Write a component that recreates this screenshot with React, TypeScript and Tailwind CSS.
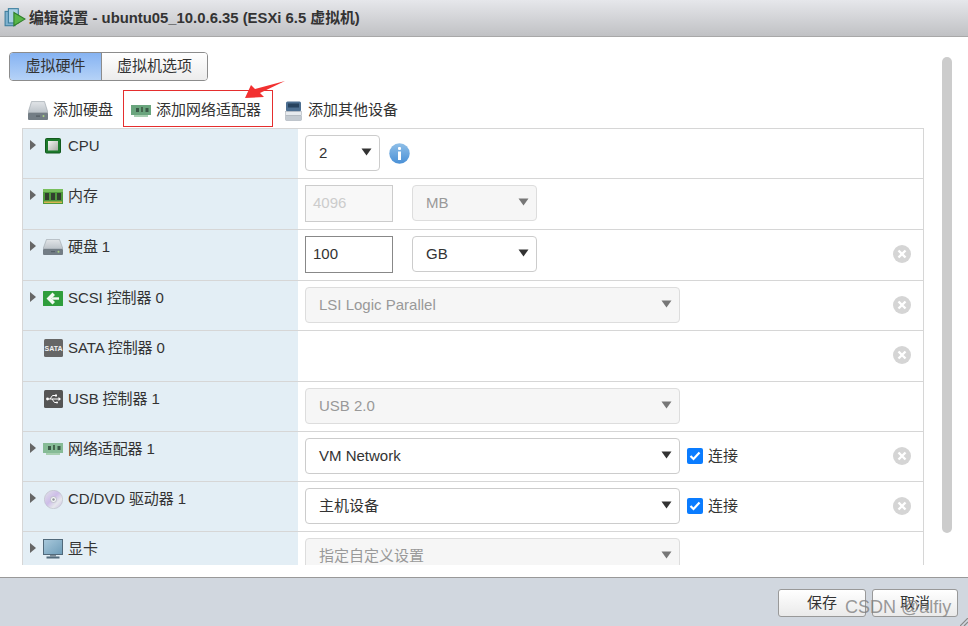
import type { ReactNode } from 'react';

const VmIcon = () => (
  <svg width="22" height="22" viewBox="0 0 20 20">
    <rect x="1" y="4" width="9" height="13" fill="#7fb2cf" stroke="#3f7f9f" />
    <rect x="4" y="1.5" width="9" height="13" fill="#a9d0e4" stroke="#3f7f9f" />
    <path d="M9 5 L19 11 L9 17 Z" fill="#58b548" stroke="#2f7f2a" />
  </svg>
);

const DiskIcon = ({ tall }: { tall?: boolean }) => (
  <svg width="20" height={tall ? 19 : 16} viewBox="0 0 20 17" preserveAspectRatio="none">
    <defs>
      <linearGradient id="diskTop" x1="0" y1="0" x2="0" y2="1">
        <stop offset="0" stopColor="#e2e5e8" />
        <stop offset="1" stopColor="#bcc3c9" />
      </linearGradient>
    </defs>
    <path d="M3.5 0.5 H16.5 L20 10.5 H0 Z" fill="url(#diskTop)" stroke="#9aa2a8" strokeWidth="0.6" />
    <rect x="0" y="10.5" width="20" height="6.5" rx="1" fill="#737d85" />
    <circle cx="15.5" cy="13.5" r="1" fill="#a8d080" />
    <rect x="8" y="13" width="4" height="1" fill="#4f585f" />
  </svg>
);

const NicIcon = ({ faded }: { faded?: boolean }) => (
  <svg width="20" height="14" viewBox="0 0 20 14">
    <rect x="0" y="1" width="20" height="10" fill={faded ? '#86bb96' : '#6aa57d'} />
    <rect x="3" y="11" width="14" height="2" fill="#a8cfb1" />
    <rect x="5" y="4" width="3" height="4" fill="#3a5a47" />
    <rect x="10" y="3" width="2" height="5" fill="#46684f" />
    <rect x="14.5" y="4" width="3" height="4" fill="#3a5a47" />
  </svg>
);

const OtherIcon = () => (
  <svg width="17" height="20" viewBox="0 0 17 20">
    <rect x="1" y="0.5" width="15" height="10" rx="1.5" fill="#4d6f91" />
    <rect x="3" y="2.5" width="11" height="4" fill="#27435f" />
    <rect x="0.5" y="10.5" width="16" height="4" fill="#e6eaee" stroke="#a8b0b8" strokeWidth="0.6" />
    <rect x="0.5" y="14.5" width="16" height="5" rx="1" fill="#c3cad1" stroke="#a8b0b8" strokeWidth="0.6" />
  </svg>
);

const CpuIcon = () => (
  <svg width="16" height="16" viewBox="0 0 16 16">
    <rect x="0.5" y="0.5" width="15" height="14.5" rx="1" fill="#1d7a2c" stroke="#125a1e" />
    <defs>
      <linearGradient id="cpuCore" x1="0" y1="0" x2="1" y2="1">
        <stop offset="0" stopColor="#f4f4f2" />
        <stop offset="1" stopColor="#a9ada6" />
      </linearGradient>
    </defs>
    <rect x="3" y="3" width="10" height="9.5" fill="url(#cpuCore)" />
  </svg>
);

const RamIcon = () => (
  <svg width="20" height="15" viewBox="0 0 20 15">
    <rect x="0" y="0" width="20" height="15" fill="#4f9a3c" />
    <rect x="0" y="0" width="20" height="3" fill="#78bf5c" />
    <rect x="2" y="4" width="4" height="7" fill="#33402f" />
    <rect x="8" y="4" width="4" height="7" fill="#33402f" />
    <rect x="14" y="4" width="4" height="7" fill="#33402f" />
    <rect x="1" y="12.5" width="18" height="1.5" fill="#d8b550" />
  </svg>
);

const ScsiIcon = () => (
  <svg width="20" height="15" viewBox="0 0 20 15">
    <rect x="0" y="0" width="20" height="15" rx="0.5" fill="#2f9e3c" />
    <path d="M9.5 1.5 L3.5 7.5 L9.5 13.5 L12 11 L8.5 7.5 L12 4 Z" fill="#f4faf4" />
    <rect x="9" y="6.3" width="7" height="2.4" fill="#f4faf4" />
  </svg>
);

const SataIcon = () => (
  <svg width="19" height="18" viewBox="0 0 19 18">
    <rect x="0" y="0" width="19" height="18" rx="1.5" fill="#666" />
    <text x="9.5" y="11.5" textAnchor="middle" fontSize="7" fontWeight="700" fill="#f2f2f2" fontFamily="Liberation Sans">SATA</text>
  </svg>
);

const UsbIcon = () => (
  <svg width="19" height="18" viewBox="0 0 19 18">
    <rect x="0" y="0" width="19" height="18" rx="1.5" fill="#555" />
    <path d="M3 9 H15 M6 9 L8.5 5.5 H11 M8 9 L10.5 12.5 H12.5" stroke="#fff" strokeWidth="1" fill="none" />
    <circle cx="3.5" cy="9" r="1.4" fill="#fff" />
    <path d="M14.5 7 L17 9 L14.5 11 Z" fill="#fff" />
    <rect x="11" y="4.5" width="2" height="2" fill="#fff" />
    <circle cx="13" cy="12.5" r="1" fill="#fff" />
  </svg>
);

const DvdIcon = () => (
  <svg width="19" height="19" viewBox="0 0 19 19">
    <defs>
      <linearGradient id="dvdSheen" x1="0" y1="0" x2="1" y2="1">
        <stop offset="0" stopColor="#e4e6ea" />
        <stop offset="0.45" stopColor="#cdbde8" />
        <stop offset="0.7" stopColor="#e6e8ec" />
        <stop offset="1" stopColor="#c6b6e2" />
      </linearGradient>
    </defs>
    <circle cx="9.5" cy="9.5" r="9.2" fill="url(#dvdSheen)" stroke="#b4b8be" strokeWidth="0.5" />
    <circle cx="9.5" cy="9.5" r="3" fill="#f4f5f7" stroke="#a8acb2" strokeWidth="0.6" />
    <circle cx="9.5" cy="9.5" r="1.2" fill="#8d9298" />
  </svg>
);

const MonitorIcon = () => (
  <svg width="20" height="20" viewBox="0 0 20 20">
    <defs>
      <linearGradient id="screenFill" x1="0" y1="0" x2="1" y2="1">
        <stop offset="0" stopColor="#a9c9dc" />
        <stop offset="1" stopColor="#6d9cb8" />
      </linearGradient>
    </defs>
    <rect x="0.5" y="0.5" width="19" height="15" fill="url(#screenFill)" stroke="#51697a" />
    <rect x="7" y="16" width="6" height="1.5" fill="#7b8b96" />
    <rect x="3.5" y="17.5" width="13" height="2" fill="#51697a" />
  </svg>
);

const Caret = ({ disabled }: { disabled?: boolean }) => (
  <svg width="11" height="8" viewBox="0 0 11 8" className="shrink-0 mb-[3px]">
    <path d="M0.5 0.5 H10.5 L5.5 7.5 Z" fill={disabled ? '#777' : '#333'} />
  </svg>
);

const Select = ({ label, width, disabled }: { label: string; width: string; disabled?: boolean }) => (
  <div
    className={`${width} h-[36px] flex items-center justify-between pl-[13px] pr-[7px] rounded-[4px] border ${
      disabled ? 'bg-[#f6f6f6] border-[#dddddd] text-[#999999]' : 'bg-white border-[#cccccc] text-[#333333]'
    }`}
  >
    <span>{label}</span>
    <Caret disabled={disabled} />
  </div>
);

const Connect = () => (
  <div className="flex items-center ml-[7px] text-[#333333]">
    <span className="w-[16px] h-[16px] rounded-[2px] bg-[#0a7cff] flex items-center justify-center">
      <svg width="12" height="10" viewBox="0 0 12 10">
        <path d="M1.5 5 L4.5 8 L10.5 1.5" stroke="#fff" strokeWidth="2.2" fill="none" />
      </svg>
    </span>
    <span className="ml-[5px]">连接</span>
  </div>
);

const RemoveIcon = () => (
  <svg width="18" height="18" viewBox="0 0 18 18">
    <circle cx="9" cy="9" r="9" fill="#d5d5d5" />
    <path d="M5.5 5.5 L12.5 12.5 M12.5 5.5 L5.5 12.5" stroke="#fff" strokeWidth="2.4" />
  </svg>
);

const InfoIcon = () => (
  <svg width="21" height="21" viewBox="0 0 21 21" className="ml-[9px]">
    <defs>
      <linearGradient id="infoFill" x1="0" y1="0" x2="0" y2="1">
        <stop offset="0" stopColor="#8fbfe8" />
        <stop offset="1" stopColor="#4a90d6" />
      </linearGradient>
    </defs>
    <circle cx="10.5" cy="10.5" r="10.2" fill="url(#infoFill)" />
    <rect x="9" y="4" width="3" height="3" rx="1" fill="#fff" />
    <rect x="9" y="8.5" width="3" height="8.5" fill="#fff" />
  </svg>
);

type Row = {
  label: string;
  icon: ReactNode;
  expand: boolean;
  height: string;
  remove: boolean;
  control: ReactNode;
};

const rows: Row[] = [
  {
    label: 'CPU',
    icon: <CpuIcon />,
    expand: true,
    height: 'h-[50px]',
    remove: false,
    control: (
      <>
        <Select label="2" width="w-[75px]" />
        <InfoIcon />
      </>
    ),
  },
  {
    label: '内存',
    icon: <RamIcon />,
    expand: true,
    height: 'h-[51px]',
    remove: false,
    control: (
      <>
        <div className="w-[88px] h-[37px] border border-[#cccccc] bg-[#f8f8f8] text-[#cccccc] flex items-center pl-[7px]">4096</div>
        <div className="ml-[19px] self-start"><Select label="MB" width="w-[125px]" disabled /></div>
      </>
    ),
  },
  {
    label: '硬盘 1',
    icon: <DiskIcon />,
    expand: true,
    height: 'h-[51px]',
    remove: true,
    control: (
      <>
        <div className="w-[88px] h-[37px] border border-[#888888] text-[#333333] flex items-center pl-[7px]">100</div>
        <div className="ml-[19px] self-start"><Select label="GB" width="w-[125px]" /></div>
      </>
    ),
  },
  {
    label: 'SCSI 控制器 0',
    icon: <ScsiIcon />,
    expand: true,
    height: 'h-[50px]',
    remove: true,
    control: <Select label="LSI Logic Parallel" width="w-[375px]" disabled />,
  },
  { label: 'SATA 控制器 0', icon: <SataIcon />, expand: false, height: 'h-[51px]', remove: true, control: null },
  {
    label: 'USB 控制器 1',
    icon: <UsbIcon />,
    expand: false,
    height: 'h-[50px]',
    remove: false,
    control: <Select label="USB 2.0" width="w-[375px]" disabled />,
  },
  {
    label: '网络适配器 1',
    icon: <NicIcon faded />,
    expand: true,
    height: 'h-[50px]',
    remove: true,
    control: (
      <>
        <Select label="VM Network" width="w-[375px]" />
        <Connect />
      </>
    ),
  },
  {
    label: 'CD/DVD 驱动器 1',
    icon: <DvdIcon />,
    expand: true,
    height: 'h-[50px]',
    remove: true,
    control: (
      <>
        <Select label="主机设备" width="w-[375px]" />
        <Connect />
      </>
    ),
  },
  {
    label: '显卡',
    icon: <MonitorIcon />,
    expand: true,
    height: 'h-[50px]',
    remove: false,
    control: <Select label="指定自定义设置" width="w-[375px]" disabled />,
  },
];

const HardwareRow = ({ row }: { row: Row }) => (
  <div className={`${row.height} shrink-0 flex border-t border-[#d6d6d6]`}>
    <div className="w-[275px] shrink-0 bg-[#e3eef5] flex items-start pt-[7px] text-[#333333]">
      <div className="w-[13px] h-[18px] shrink-0 flex items-center justify-end">
        {row.expand && (
          <svg width="6" height="10" viewBox="0 0 6 10">
            <path d="M0 0 L6 5 L0 10 Z" fill="#666" />
          </svg>
        )}
      </div>
      <div className="w-[20px] h-[20px] ml-[7px] shrink-0 flex items-center justify-center">{row.icon}</div>
      <span className="ml-[5px] leading-[20px] tracking-[-0.1px]">{row.label}</span>
    </div>
    <div className="flex-1 flex items-start pt-[6px] pl-[7px] pr-[12px]">
      <div className="flex items-center">{row.control}</div>
      {row.remove && (
        <div className="ml-auto self-start mt-[9px]">
          <RemoveIcon />
        </div>
      )}
    </div>
  </div>
);

const FooterButton = ({ label, width }: { label: string; width: string }) => (
  <div className={`${width} h-[28px] rounded-[3px] border border-[#999999] bg-gradient-to-b from-white to-[#eaeaea] flex items-center justify-center text-[#333333]`}>
    {label}
  </div>
);

export default function App() {
  return (
    <div className="relative w-[968px] h-[626px] overflow-hidden bg-white flex flex-col text-[15px] font-['Liberation_Sans','Noto_Sans_CJK_SC',sans-serif]">
      <div className="h-[37px] shrink-0 border-b border-[#a8a8a8] bg-gradient-to-b from-[#e6e7eb] to-[#c0c1c4] flex items-center pl-[4px]">
        <VmIcon />
        <span className="ml-[3px] text-[14.85px] font-bold text-[#333333]">编辑设置 - ubuntu05_10.0.6.35 (ESXi 6.5 虚拟机)</span>
      </div>

      <div className="h-[540px] shrink-0 flex">
        <div className="w-[942px] shrink-0 pt-[15px]">
          <div className="ml-[9px] flex w-[199px] h-[29px] rounded-[4px] border border-[#8c8c8c] overflow-hidden text-[#333333]">
            <div className="w-[92px] bg-gradient-to-b from-[#86b3f2] to-[#b5d2f7] border-r border-[#8c8c8c] flex items-center justify-center">虚拟硬件</div>
            <div className="flex-1 bg-gradient-to-b from-white to-[#ececec] flex items-center justify-center">虚拟机选项</div>
          </div>

          <div className="ml-[22px] mt-[9px] h-[37px] flex items-center text-[#333333]">
            <div className="w-[101px] pl-[6px] pt-[4px] flex items-center gap-[5px]">
              <DiskIcon tall />
              <span>添加硬盘</span>
            </div>
            <div className="w-[150px] h-[37px] border border-[#e52e2e] pl-[7px] pt-[4px] flex items-center gap-[5px]">
              <NicIcon />
              <span>添加网络适配器</span>
            </div>
            <div className="ml-[12px] pt-[4px] flex items-center gap-[6px]">
              <OtherIcon />
              <span>添加其他设备</span>
            </div>
          </div>

          <div className="ml-[22px] mt-[1px] w-[902px] h-[437px] overflow-hidden flex flex-col border-x border-[#d6d6d6]">
            {rows.map((row) => (
              <HardwareRow key={row.label} row={row} />
            ))}
          </div>
        </div>
        <div className="w-[10px] h-[476px] mt-[20px] rounded-full bg-[#cccccc]" />
      </div>

      <div className="flex-1 border-t border-[#999999] bg-[#d1d7df] flex justify-end items-start gap-[6px] pt-[11px] pr-[10px]">
        <FooterButton label="保存" width="w-[88px]" />
        <FooterButton label="取消" width="w-[86px]" />
      </div>

      {/* annotation arrow */}
      <svg width="44" height="20" viewBox="0 0 44 20" className="absolute left-[243px] top-[80px]">
        <path d="M2 18 L8 5 L12 9 L42 1 L17 13 L21 17 Z" fill="#f23030" />
      </svg>

      {/* window resize grip */}
      <svg width="8" height="8" viewBox="0 0 8 8" className="absolute right-0 bottom-0">
        <path d="M0 8 L8 0 M4 8 L8 4" stroke="#888" strokeWidth="1.2" />
      </svg>

      <div className="absolute left-[845px] top-[595px] text-[18px] leading-[24px] text-[#808080]/80 whitespace-nowrap">CSDN @alfiy</div>
    </div>
  );
}
